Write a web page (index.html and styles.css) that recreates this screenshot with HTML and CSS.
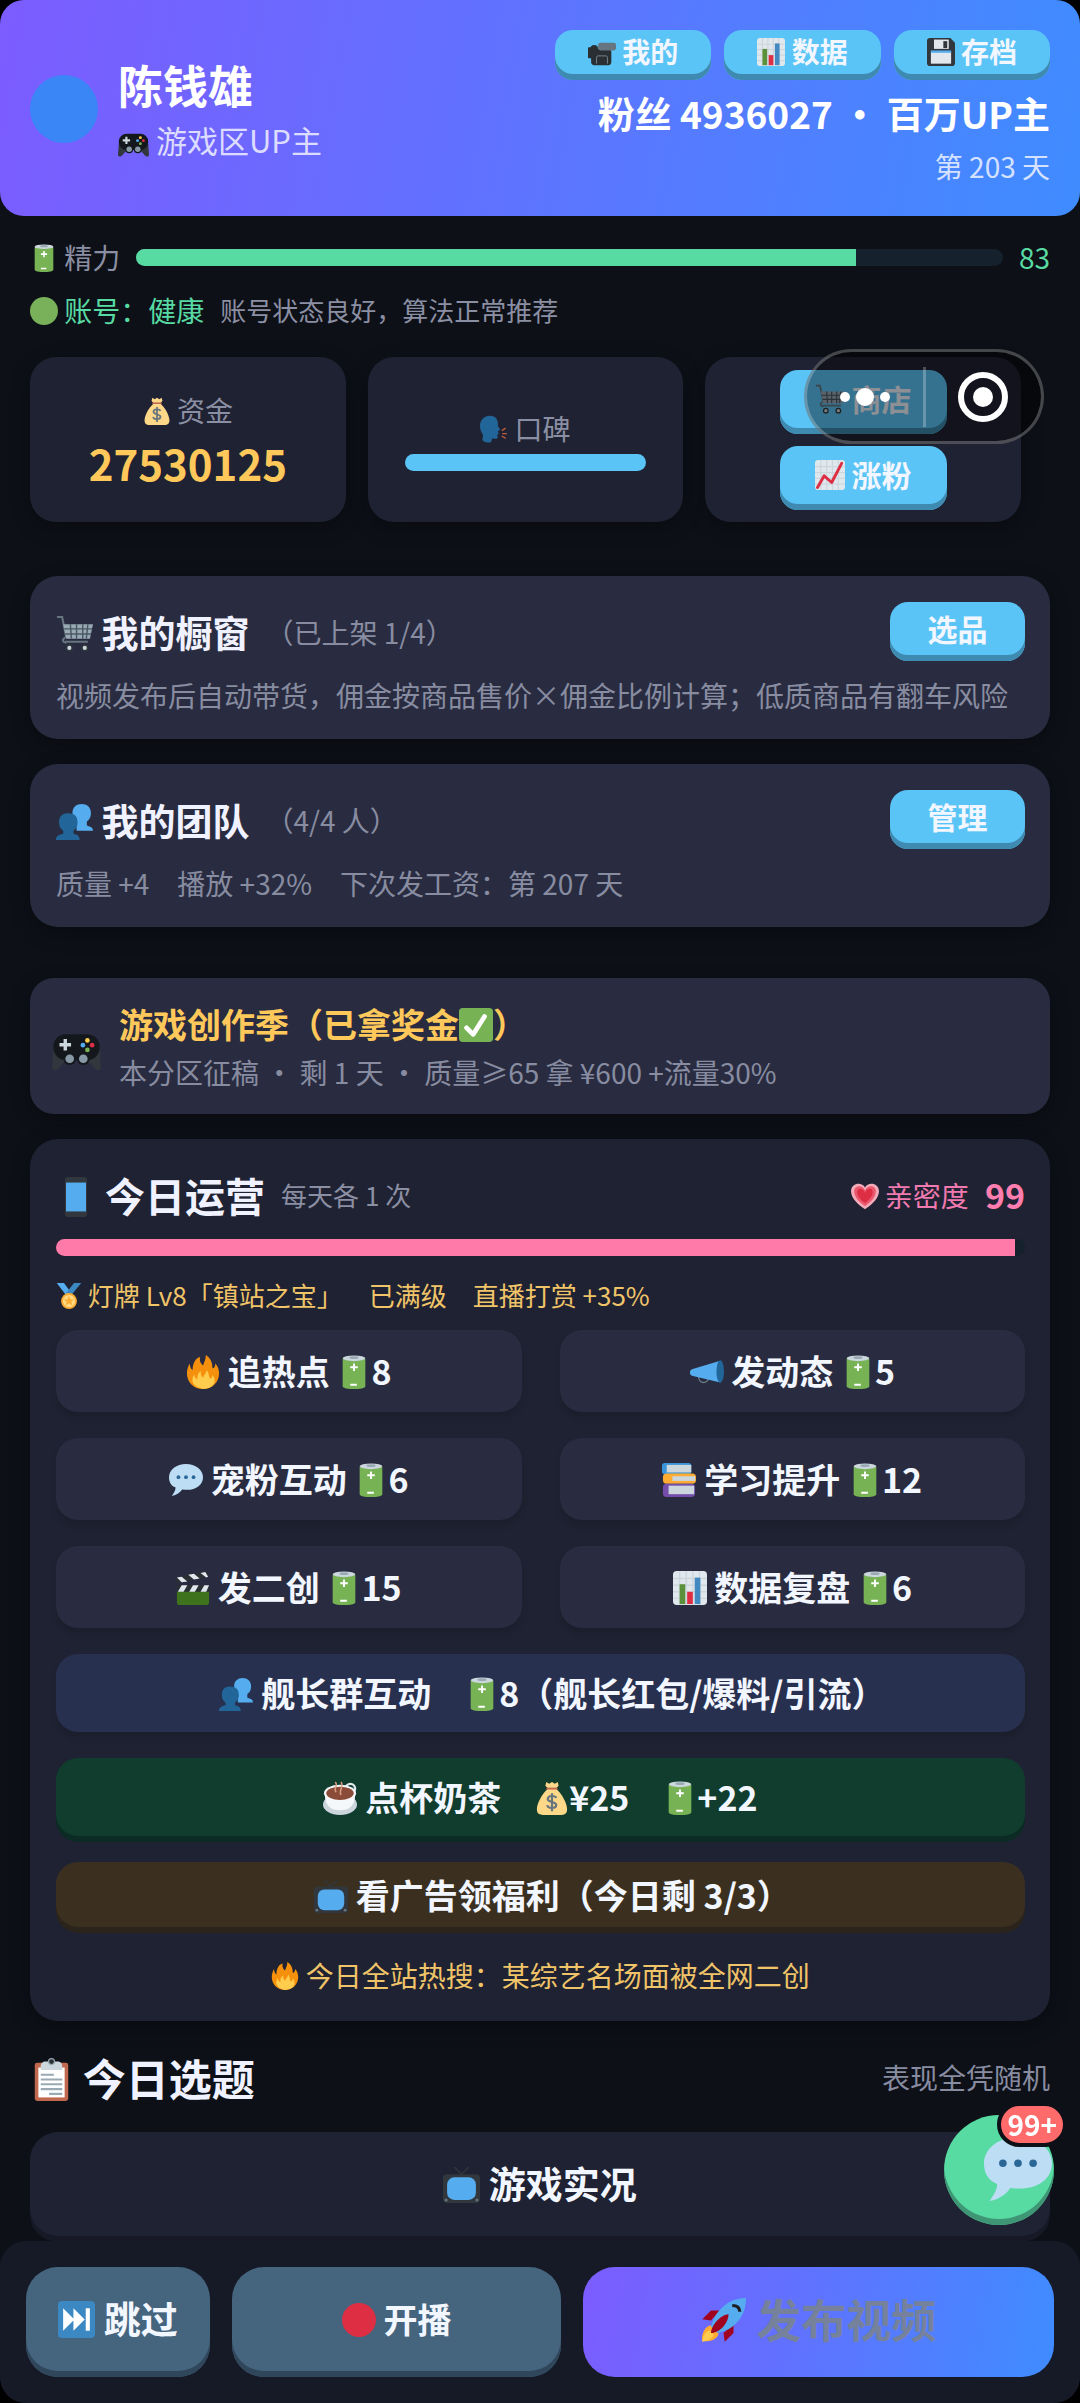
FILE: index.html
```html
<!DOCTYPE html>
<html lang="zh-CN">
<head>
    <meta charset="UTF-8">
    <meta name="viewport" content="width=device-width, initial-scale=1.0">
    <title>UP主模拟器</title>
    <link rel="stylesheet" href="styles.css">
</head>
<body>
    <!-- icon sprite -->
    <svg class="sprite" aria-hidden="true">
        <symbol id="gamepad" viewBox="0 0 36 36">
            <path fill="#31373D" d="M1 20L0 33c0 3 3 3 5 1l6-7h14l6 7c2 2 5 2 5-1l-1-13z"/>
            <rect x="1" y="9" width="34" height="19" rx="9" fill="#14181c"/>
            <circle cx="13" cy="27" r="4.6" fill="#14181c"/><circle cx="23" cy="27" r="4.6" fill="#14181c"/>
            <circle cx="13" cy="27" r="3.2" fill="#8899A6"/><circle cx="23" cy="27" r="3.2" fill="#8899A6"/>
            <path fill="#CCD6DD" d="M8.500 12.500h2.500v3h3v2.500h-3v3H8.500v-3h-3v-2.500h3z"/>
            <circle cx="26" cy="13.500" r="1.700" fill="#FFCC4D"/><circle cx="29.500" cy="17" r="1.700" fill="#DD2E44"/>
            <circle cx="22.700" cy="17" r="1.700" fill="#55ACEE"/><circle cx="26" cy="20.500" r="1.700" fill="#77B255"/>
        </symbol>
        <symbol id="movie" viewBox="0 0 36 36">
            <rect x="0" y="12" width="5" height="14" rx="1" fill="#292F33"/>
            <rect x="4" y="14" width="26" height="21" rx="4" fill="#292F33"/>
            <circle cx="8" cy="14" r="5" fill="#292F33"/>
            <rect x="13" y="6" width="23" height="10" rx="3" fill="#66757F"/>
            <path fill="none" stroke="#8899A6" d="M11 33v-8q0-2 2-2h10q2 0 2 2v8"/>
        </symbol>
        <symbol id="bars" viewBox="0 0 36 36">
            <rect width="36" height="36" rx="4" fill="#E1E8ED"/>
            <path fill="none" stroke="#CCD6DD" stroke-width="1.500" d="M0 8h36M0 15h36M0 22h36M0 29h36M7 0v36M14 0v36M21 0v36M28 0v36"/>
            <path fill="#5C913B" d="M7 14h6v21H7z"/><path fill="#DD2E44" d="M15 22h6v13h-6z"/><path fill="#4289C1" d="M23 7h6v28h-6z"/>
        </symbol>
        <symbol id="disk" viewBox="0 0 36 36">
            <path fill="#31373D" d="M4 0h26l6 6v26a4 4 0 0 1-4 4H4a4 4 0 0 1-4-4V4a4 4 0 0 1 4-4z"/>
            <path fill="#E1E8ED" d="M9 2h19v12H9z"/><path fill="#31373D" d="M21 4h5v9h-5z"/>
            <path fill="#E1E8ED" d="M5 17h26v16H5z"/><path fill="#55ACEE" d="M5 16h26v3H5z"/>
        </symbol>
        <symbol id="battery" viewBox="0 0 36 36">
            <path fill="#77B255" d="M6 4v29c0 4 24 4 24 0V4z"/>
            <ellipse cx="18" cy="3.500" rx="12" ry="3" fill="#CCD6DD"/><ellipse cx="18" cy="2.800" rx="5" ry="1.500" fill="#99AAB5"/>
            <path fill="#fff" d="M17 9h2v3h3v2h-3v3h-2v-3h-3v-2h3zM14 30.500h7v2h-7z"/>
        </symbol>
        <symbol id="green" viewBox="0 0 36 36"><circle cx="18" cy="18" r="18" fill="#78B159"/></symbol>
        <symbol id="red" viewBox="0 0 36 36"><circle cx="18" cy="18" r="18" fill="#DD2E44"/></symbol>
        <symbol id="money" viewBox="0 0 36 36">
            <path fill="#FDD888" d="M12 1l3 2 3-2 3 2 3-2 1 4-3 3c7 6 12 16 12 22 0 5-3 6-6 6H8c-3 0-6-1-6-6C2 24 7 14 14 8l-3-3z"/>
            <path fill="#BF6952" d="M12 7h12v2H12z"/>
            <path fill="none" stroke="#67757F" stroke-width="2.300" d="M22.500 18c-1-3-9-3-9 1s9 2.500 9 6.500-9 4-9.500 0M18 13v19"/>
        </symbol>
        <symbol id="speak" viewBox="0 0 36 36">
            <path fill="#269" d="M13 1C5 1 0 7 0 14c0 5 2 8 4 12l-1 6c2 3 8 4 11 3l2-5c3 1 6 1 7-1l-1-3 2-2-1-3 3-2-3-5C24 6 20 1 13 1z"/>
            <path fill="none" stroke="#BE5B3A" stroke-width="1.800" d="M28 20l5-3M28.500 24h6M28 27l5 3"/>
        </symbol>
        <symbol id="cart" viewBox="0 0 36 36">
            <path fill="none" stroke="#66757F" stroke-width="2" d="M1 2h5l4 20M9 26h22M9 22c-4 2-2 5 1 5"/>
            <path fill="#99AAB5" d="M7 9h29l-3 14H10z"/>
            <path fill="none" stroke="#4b5864" stroke-width="1.400" d="M8 13.500h27M9 18.500h25M14 9l1 14M20 9v14M26 9v14M31 9l-1.500 14"/>
            <circle cx="13" cy="32" r="3.500" fill="#31373D"/><circle cx="28" cy="32" r="3.500" fill="#31373D"/>
            <circle cx="13" cy="32" r="2" fill="#CCD6DD"/><circle cx="28" cy="32" r="2" fill="#CCD6DD"/>
        </symbol>
        <symbol id="trend" viewBox="0 0 36 36">
            <rect width="36" height="36" rx="4" fill="#E1E8ED"/>
            <path fill="none" stroke="#CCD6DD" stroke-width="1.500" d="M0 8h36M0 15h36M0 22h36M0 29h36M7 0v36M14 0v36M21 0v36M28 0v36"/>
            <path fill="none" stroke="#DD2E44" stroke-width="3.500" stroke-linecap="round" stroke-linejoin="round" d="M3 33l8-14 9 8L32 4"/>
        </symbol>
        <symbol id="people" viewBox="0 0 36 36">
            <path fill="#55ACEE" d="M36 27c0-4-4-4-6-5v-4c3-2 4-5 4-8 0-6-4-9-9-9s-9 3-9 9c0 3 1 6 4 8v9z"/>
            <path fill="#269" d="M0 36c0-4 3-5 7-6v-3c-3-2-4-5-4-8 0-6 3-9 9-9s9 3 9 9c0 3-1 6-4 8v3c4 1 6 2 6 6z"/>
        </symbol>
        <symbol id="check" viewBox="0 0 36 36">
            <rect width="36" height="36" rx="4" fill="#77B255"/>
            <path fill="none" stroke="#fff" stroke-width="5" stroke-linecap="round" stroke-linejoin="round" d="M8 21l7 7L27 9"/>
        </symbol>
        <symbol id="phone" viewBox="0 0 36 36">
            <rect x="8" y="0" width="20" height="36" rx="3" fill="#31373D"/><path fill="#55ACEE" d="M9 5h18v26H9z"/>
        </symbol>
        <symbol id="heart" viewBox="0 0 36 36">
            <path fill="#F4ABBA" d="M18 35C8 29 0 20 0 12 0 1 14-1 18 7c4-8 18-6 18 5 0 8-8 17-18 23z"/>
            <path fill="#EA596E" d="M18 31C10 26 4 19 4 12c0-8 11-9 14-1 3-8 14-7 14 1 0 7-6 14-14 19z"/>
            <path fill="#DD2E44" d="M18 27C12 23 8 18 8 13c0-6 8-6 10 1 2-7 10-7 10-1 0 5-4 10-10 14z"/>
        </symbol>
        <symbol id="medal" viewBox="0 0 36 36">
            <path fill="#55ACEE" d="M1 0h10l9 12-6 5z"/><path fill="#3B88C3" d="M25 0h10L21 17l-7-3z"/>
            <circle cx="18" cy="25" r="11" fill="#FFAC33"/><circle cx="18" cy="25" r="8.500" fill="#FFD983"/>
            <path fill="#FFAC33" d="M18 18l2 5h5l-4 3 2 5-5-3-5 3 2-5-4-3h5z"/>
        </symbol>
        <symbol id="fire" viewBox="0 0 36 36">
            <path fill="#F4900C" d="M35 19c0 10-7 17-17 17S1 29 1 19c0-3 1-7 3-10 0 3 1 6 3 7C7 9 10 3 15 2c-1 5 1 7 3 9 1-3 3-6 3-11 5 3 7 8 7 14 2 0 3-2 3-5 3 3 4 7 4 10z"/>
            <path fill="#FFCC4D" d="M28 21c0 2-1 4-2 4-2 0-1-5-4-9 0 3-3 5-4 8-2-2-3-4-2-7-4 2-4 6-4 9-2-1-3-3-3-5-3 3-5 12 9 15 14-1 14-10 10-15z"/>
        </symbol>
        <symbol id="horn" viewBox="0 0 36 36">
            <path fill="none" stroke="#66757F" stroke-width="1.500" d="M9 23c1 8 9 8 11 1"/>
            <path fill="#55ACEE" d="M32 6L2 15c-3 2-3 5 0 7l30 7z"/><ellipse cx="32" cy="17.500" rx="4" ry="12" fill="#269"/>
        </symbol>
        <symbol id="bubble" viewBox="0 0 36 36">
            <path fill="#BDDDF4" d="M18 1C8 1 0 7 0 15c0 5 2 9 7 11 0 3-2 6-4 9 5-1 9-4 11-7 13 2 22-4 22-13C36 7 28 1 18 1z"/>
            <circle cx="10" cy="15" r="2" fill="#2A6797"/><circle cx="18" cy="15" r="2" fill="#2A6797"/><circle cx="26" cy="15" r="2" fill="#2A6797"/>
        </symbol>
        <symbol id="books" viewBox="0 0 36 36">
            <rect x="0" y="0" width="31" height="12" rx="3" fill="#3B94D9"/><path fill="#CCD6DD" d="M5 2h26v8H5z"/>
            <rect x="1" y="11" width="35" height="11" rx="4" fill="#FFAC33"/><path fill="#CCD6DD" d="M11 14h24v5H11z"/>
            <rect x="1" y="22" width="34" height="14" rx="4" fill="#744EAA"/><path fill="#CCD6DD" d="M7 24h27v9H7z"/>
        </symbol>
        <symbol id="clap" viewBox="0 0 36 36">
            <path fill="#3E721D" d="M1 20h34v13a3 3 0 0 1-3 3H4a3 3 0 0 1-3-3z"/>
            <path fill="#292F33" d="M1 15h34v7H1zM0 7l33-7 1 6L1 13z"/>
            <path fill="#E1E8ED" d="M6 15h6l-4 7H2zM18 15h6l-4 7h-6zM30 15h5l-3 7h-6zM1 7l5-1 6 5-6 1zM13 4l6-1 6 5-6 1zM26 2l5-1 3 5-2 1z"/>
        </symbol>
        <symbol id="coffee" viewBox="0 0 36 36">
            <ellipse cx="18" cy="25" rx="18" ry="11" fill="#CCD6DD"/>
            <circle cx="29" cy="8" r="5" fill="none" stroke="#E1E8ED" stroke-width="2.500"/>
            <path fill="#F5F8FA" d="M2 14c0 12 6 17 16 17s16-5 16-17z"/>
            <ellipse cx="18" cy="13" rx="17" ry="9" fill="#F5F8FA"/><ellipse cx="18" cy="13" rx="14.500" ry="7" fill="#8A4B38"/>
            <path fill="none" stroke="#D99E82" stroke-width="1.500" d="M13 1c4 4-3 7 1 11M19 1c4 5-3 8 0 14"/>
        </symbol>
        <symbol id="tv" viewBox="0 0 36 36">
            <path fill="none" stroke="#31373D" stroke-width="1.500" d="M11 1l7 7 7-7"/>
            <rect x="0" y="8" width="36" height="28" rx="4" fill="#31373D"/><rect x="4" y="11" width="28" height="22" rx="7" fill="#55ACEE"/>
            <circle cx="3" cy="33" r="1.500" fill="#66757F"/><circle cx="33" cy="33" r="1.500" fill="#66757F"/>
        </symbol>
        <symbol id="clipboard" viewBox="0 0 36 36">
            <rect x="4" y="4" width="28" height="32" rx="2" fill="#C1694F"/><path fill="#fff" d="M7 8h22v25H7z"/>
            <path fill="#CCD6DD" d="M13 3h3a2 2 0 0 1 4 0h3c3 0 4 2 4 4v3H9V7c0-2 1-4 4-4z"/><circle cx="18" cy="3" r="2.500" fill="#292F33" stroke="#99AAB5"/>
            <path fill="none" stroke="#99AAB5" stroke-width="1.800" d="M9 14h11M9 18h18M9 22h18M9 26h18M16 30h11"/>
        </symbol>
        <symbol id="next" viewBox="0 0 36 36">
            <rect width="36" height="36" rx="4" fill="#3B88C3"/>
            <path fill="#fff" d="M5 7l11 11L5 29zM15 7l11 11-11 11zM27 7h4v22h-4z"/>
        </symbol>
        <symbol id="rocket" viewBox="0 0 36 36">
            <path fill="#A0041E" d="M1 17l7-7h7l-7 8zM19 35l7-7v-7l-8 7z"/>
            <path fill="#FFAC33" d="M1 34c-1-6 3-12 7-12l6 6c0 4-6 8-13 6z"/><path fill="#FFCC4D" d="M1 35c0-4 3-9 6-9l3 3c0 3-5 6-9 6z"/>
            <path fill="#55ACEE" d="M36 0c-9 0-17 4-23 12-3 4-4 8-5 11l5 5c4-1 8-2 12-5C33 17 36 9 36 0z"/>
            <path fill="#A0041E" d="M8 28c0-6 8-15 14-15 0 7-7 15-14 15z"/><path fill="none" stroke="#1b1f23" stroke-width="2.500" d="M25 6c4 0 6 2 6 5"/>
        </symbol>
    </svg>

    <div class="app">
        <header class="header">
            <div class="profile">
                <div class="avatar"></div>
                <div>
                    <h1 class="name">陈钱雄</h1>
                    <div class="role"><svg class="emoji"><use href="#gamepad"/></svg> 游戏区UP主</div>
                </div>
            </div>
            <div class="header-right">
                <div class="header-btns">
                    <button class="btn btn-small"><svg class="emoji"><use href="#movie"/></svg> 我的</button>
                    <button class="btn btn-small"><svg class="emoji"><use href="#bars"/></svg> 数据</button>
                    <button class="btn btn-small"><svg class="emoji"><use href="#disk"/></svg> 存档</button>
                </div>
                <div class="fans">粉丝 4936027 · 百万UP主</div>
                <div class="day">第 203 天</div>
            </div>
        </header>

        <main class="main">
            <div class="energy">
                <span><svg class="emoji"><use href="#battery"/></svg> 精力</span>
                <div class="track"><div class="fill fill-green" style="width: 83%"></div></div>
                <span class="green">83</span>
            </div>
            <div class="account">
                <span class="green"><svg class="emoji"><use href="#green"/></svg> 账号：健康</span>
                <span class="tip">账号状态良好，算法正常推荐</span>
            </div>

            <section class="stats">
                <div class="stat">
                    <div class="stat-label"><svg class="emoji"><use href="#money"/></svg> 资金</div>
                    <div class="stat-value">27530125</div>
                </div>
                <div class="stat">
                    <div class="stat-label"><svg class="emoji"><use href="#speak"/></svg> 口碑</div>
                    <div class="track track-rep"><div class="fill fill-blue" style="width: 100%"></div></div>
                </div>
                <div class="stat stat-btns">
                    <button class="btn"><svg class="emoji"><use href="#cart"/></svg> 商店</button>
                    <button class="btn"><svg class="emoji"><use href="#trend"/></svg> 涨粉</button>
                </div>
            </section>

            <section class="panel">
                <div class="panel-head">
                    <h2><svg class="emoji"><use href="#cart"/></svg> 我的橱窗</h2>
                    <span class="note">（已上架 1/4）</span>
                    <button class="btn btn-wide">选品</button>
                </div>
                <p class="note">视频发布后自动带货，佣金按商品售价×佣金比例计算；低质商品有翻车风险</p>
            </section>

            <section class="panel">
                <div class="panel-head">
                    <h2><svg class="emoji"><use href="#people"/></svg> 我的团队</h2>
                    <span class="note">（4/4 人）</span>
                    <button class="btn btn-wide">管理</button>
                </div>
                <p class="note">质量 +4　播放 +32%　下次发工资：第 207 天</p>
            </section>

            <section class="event">
                <svg class="emoji event-icon"><use href="#gamepad"/></svg>
                <div>
                    <h3>游戏创作季（已拿奖金<svg class="emoji"><use href="#check"/></svg>）</h3>
                    <p class="note">本分区征稿 · 剩 1 天 · 质量≥65 拿 ¥600 +流量30%</p>
                </div>
            </section>

            <section class="ops">
                <div class="ops-head">
                    <h2><svg class="emoji"><use href="#phone"/></svg> 今日运营</h2>
                    <span class="tip">每天各 1 次</span>
                    <span class="love"><svg class="emoji"><use href="#heart"/></svg> 亲密度</span>
                    <strong class="love-value">99</strong>
                </div>
                <div class="track"><div class="fill fill-pink" style="width: 99%"></div></div>
                <p class="badge-line"><svg class="emoji"><use href="#medal"/></svg> 灯牌 Lv8「镇站之宝」　已满级　直播打赏 +35%</p>
                <div class="actions">
                    <button class="action"><svg class="emoji"><use href="#fire"/></svg> 追热点 <svg class="emoji"><use href="#battery"/></svg>8</button>
                    <button class="action"><svg class="emoji"><use href="#horn"/></svg> 发动态 <svg class="emoji"><use href="#battery"/></svg>5</button>
                    <button class="action"><svg class="emoji"><use href="#bubble"/></svg> 宠粉互动 <svg class="emoji"><use href="#battery"/></svg>6</button>
                    <button class="action"><svg class="emoji"><use href="#books"/></svg> 学习提升 <svg class="emoji"><use href="#battery"/></svg>12</button>
                    <button class="action"><svg class="emoji"><use href="#clap"/></svg> 发二创 <svg class="emoji"><use href="#battery"/></svg>15</button>
                    <button class="action"><svg class="emoji"><use href="#bars"/></svg> 数据复盘 <svg class="emoji"><use href="#battery"/></svg>6</button>
                    <button class="action action-full action-hang action-blue"><svg class="emoji"><use href="#people"/></svg> 舰长群互动　<svg class="emoji"><use href="#battery"/></svg>8（舰长红包/爆料/引流）</button>
                    <button class="action action-full action-green"><svg class="emoji"><use href="#coffee"/></svg> 点杯奶茶　<svg class="emoji"><use href="#money"/></svg>¥25　<svg class="emoji"><use href="#battery"/></svg>+22</button>
                    <button class="action action-full action-hang action-brown"><svg class="emoji"><use href="#tv"/></svg> 看广告领福利（今日剩 3/3）</button>
                </div>
                <p class="hot"><svg class="emoji"><use href="#fire"/></svg> 今日全站热搜：某综艺名场面被全网二创</p>
            </section>

            <div class="topic-head">
                <h2><svg class="emoji"><use href="#clipboard"/></svg> 今日选题</h2>
                <span class="note">表现全凭随机</span>
            </div>
            <button class="topic"><svg class="emoji"><use href="#tv"/></svg> 游戏实况</button>
        </main>

        <nav class="bottom-bar">
            <button class="bar-btn bar-skip"><svg class="emoji"><use href="#next"/></svg> 跳过</button>
            <button class="bar-btn"><svg class="emoji"><use href="#red"/></svg> 开播</button>
            <button class="bar-btn bar-publish"><svg class="emoji"><use href="#rocket"/></svg> 发布视频</button>
        </nav>

        <button class="fab" aria-label="私信">
            <svg class="fab-icon"><use href="#bubble"/></svg>
            <span class="fab-badge">99+</span>
        </button>

        <!-- mini program capsule -->
        <div class="capsule">
            <button class="capsule-btn capsule-more" aria-label="更多">
                <svg width="52" height="20" viewBox="0 0 52 20"><circle cx="6" cy="10" r="5"/><circle cx="26" cy="10" r="9"/><circle cx="46" cy="10" r="5"/></svg>
            </button>
            <button class="capsule-btn" aria-label="关闭">
                <svg width="50" height="50" viewBox="0 0 50 50"><circle cx="25" cy="25" r="22" fill="none" stroke="#fff" stroke-width="6"/><circle cx="25" cy="25" r="10"/></svg>
            </button>
        </div>
    </div>
</body>
</html>
```
FILE: styles.css
```css
* {
    box-sizing: border-box;
}

html {
    background: #000;
}

body {
    margin: 0;
    font-family: 'Noto Sans CJK SC', sans-serif;
    font-size: 28px;
    line-height: 40px;
    text-spacing-trim: space-all;
    color: #f0f2ff;
}

h1, h2, h3, p {
    margin: 0;
}

button {
    font-family: inherit;
    font-weight: 700;
    color: #f2f6ff;
    border: none;
    padding: 0;
    white-space: nowrap;
    cursor: pointer;
}

.sprite {
    position: absolute;
    width: 0;
    height: 0;
}

.emoji {
    width: 1em;
    height: 1em;
    vertical-align: -0.12em;
}

.app {
    min-height: 100vh;
    padding-bottom: 162px;
    background: #0d1017;
    border-radius: 26px;
}

/* header */
.header {
    display: flex;
    justify-content: space-between;
    align-items: center;
    padding: 30px 30px 28px;
    border-radius: 24px;
    background: linear-gradient(100deg, #7c5cff, #3f8cff);
}

.profile {
    display: flex;
    align-items: center;
    gap: 20px;
}

.avatar {
    width: 68px;
    height: 68px;
    border-radius: 50%;
    background: #3a86f7;
}

.name {
    font-size: 45px;
    line-height: 66px;
    color: #fff;
}

.role {
    margin-bottom: 4px;
    font-size: 31px;
    line-height: 44px;
    color: #dcdcff;
}

.header-right {
    text-align: right;
}

.header-btns {
    display: flex;
    justify-content: flex-end;
    gap: 13px;
}

.fans {
    margin-top: 6px;
    font-size: 37px;
    font-weight: 700;
    line-height: 54px;
    color: #fff;
}

.day {
    margin: 6px 0 2px;
    color: #d5e2ff;
}

.btn {
    height: 64px;
    padding: 0 35px 8px;
    border-radius: 18px;
    font-size: 30px;
    line-height: 40px;
    background: #5ac4f6;
    box-shadow: inset 0 -6px 0 #3f8ab0;
}

.btn-small {
    height: 50px;
    padding: 0 33px 8px;
    font-size: 28px;
}

.btn-wide {
    width: 135px;
    height: 59px;
    padding: 0 0 8px;
    margin-left: auto;
}

/* status rows */
.main {
    padding: 21px 30px 0;
}

.energy {
    display: flex;
    align-items: center;
    gap: 16px;
    color: #8b8fa3;
}

.track {
    flex: 1;
    height: 17px;
    border-radius: 9px;
    background: #15212c;
    overflow: hidden;
}

.fill {
    height: 100%;
}

.fill-green {
    background: #58daa3;
}

.fill-blue {
    background: #5ac4f6;
}

.fill-pink {
    background: #ff7aa8;
}

.green {
    color: #58daa3;
}

.account {
    display: flex;
    align-items: center;
    gap: 16px;
    margin-top: 13px;
}

.tip {
    font-size: 26px;
    color: #8b8fa3;
}

.stats {
    display: grid;
    grid-template-columns: repeat(3, 1fr);
    gap: 22px;
    margin: 27px 29px 54px 0;
}

.stat {
    display: flex;
    flex-direction: column;
    align-items: center;
    justify-content: center;
    gap: 6px;
    height: 165px;
    border-radius: 26px;
    background: #1f2232;
    box-shadow: 0 6px 20px rgba(0, 0, 0, 0.3);
}

.stat-label {
    color: #8b8fa3;
}

.stat-value {
    font-size: 42px;
    font-weight: 700;
    line-height: 54px;
    color: #ffc85a;
}

.track-rep {
    flex: none;
    width: 241px;
}

.stat-btns {
    gap: 12px;
}

/* panels */
.panel {
    margin-bottom: 25px;
    padding: 26px 25px 24px 26px;
    border-radius: 28px;
    background: #292c40;
    box-shadow: 0 6px 20px rgba(0, 0, 0, 0.3);
}

.panel-head {
    display: flex;
    align-items: center;
    gap: 16px;
    margin-bottom: 14px;
}

.panel h2 {
    font-size: 37px;
    line-height: 56px;
}

.note {
    color: #888ca1;
}

.event {
    display: flex;
    align-items: center;
    gap: 18px;
    margin: 51px 0 25px;
    padding: 22px;
    border-radius: 24px;
    background: #292c40;
    box-shadow: 0 6px 20px rgba(0, 0, 0, 0.3);
}

.event-icon {
    font-size: 49px;
}

.event h3 {
    margin-bottom: 4px;
    font-size: 34px;
    line-height: 48px;
    color: #ffc85a;
}

.ops {
    padding: 26px 25px 26px 26px;
    border-radius: 28px;
    background: #1f2232;
    box-shadow: 0 6px 20px rgba(0, 0, 0, 0.3);
}

.ops-head {
    display: flex;
    align-items: center;
    gap: 16px;
    margin-bottom: 14px;
}

.ops h2 {
    font-size: 40px;
    line-height: 60px;
}

.love {
    margin-left: auto;
    color: #f07ab0;
}

.love-value {
    font-size: 34px;
    color: #ff7eb0;
}

.badge-line {
    margin: 19px 0 15px;
    font-size: 26px;
    color: #f0c468;
}

.actions {
    display: grid;
    grid-template-columns: 1fr 1fr;
    gap: 26px 38px;
}

.action {
    height: 82px;
    border-radius: 22px;
    font-size: 34px;
    line-height: 48px;
    background: #292c40;
    box-shadow: 0 6px 6px rgba(0, 0, 0, 0.12);
}

.action-full {
    grid-column: 1 / -1;
    height: 78px;
}

/* balances the blank half of the closing bracket */
.action-hang {
    padding-left: 24px;
}

.action-blue {
    background: #28304f;
}

.action-green {
    background: #103d2e;
    box-shadow: 0 6px 0 #0c2b24;
}

.action-brown {
    height: 65px;
    background: #3b3020;
    box-shadow: 0 6px 0 #2a241d;
}

.hot {
    margin-top: 28px;
    text-align: center;
    color: #f0c468;
}

/* topics */
.topic-head {
    display: flex;
    justify-content: space-between;
    align-items: center;
    padding: 25px 0 24px;
}

.topic-head h2 {
    font-size: 43px;
    line-height: 62px;
}

.topic {
    width: 100%;
    height: 104px;
    padding-bottom: 2px;
    border-radius: 28px;
    font-size: 37px;
    background: #1f2232;
    box-shadow: 0 6px 0 #171a26;
}

.bottom-bar {
    position: fixed;
    left: 0;
    right: 0;
    bottom: 0;
    display: grid;
    grid-template-columns: 184px 7fr 10fr;
    gap: 22px;
    padding: 26px;
    border-radius: 26px;
    background: #161a26;
}

.bar-btn {
    height: 110px;
    padding-bottom: 8px;
    border-radius: 32px;
    font-size: 34px;
    background: #45657f;
    box-shadow: inset 0 -6px 0 #30475b;
}

.bar-skip {
    font-size: 37px;
}

.bar-publish {
    font-size: 45px;
    color: #76829c;
    background: linear-gradient(100deg, #7c5cff, #3f8cff);
    box-shadow: none;
}

/* floating controls */
.fab {
    position: fixed;
    right: 26px;
    bottom: 178px;
    width: 110px;
    height: 110px;
    border-radius: 50%;
    background: #58daa3;
    box-shadow: inset 0 -6px 0 #3f9675;
}

.fab-icon {
    position: absolute;
    top: 20px;
    right: 2px;
    width: 68px;
    height: 68px;
}

.fab-badge {
    position: absolute;
    top: -13px;
    right: -13px;
    padding: 0 6px;
    border: 4px solid #0d1017;
    border-radius: 24px;
    font-size: 28px;
    line-height: 37px;
    color: #fff;
    background: #ff6b6b;
}

.capsule {
    position: fixed;
    top: 349px;
    right: 36px;
    display: flex;
    align-items: center;
    width: 240px;
    height: 95px;
    border: 3px solid rgba(255, 255, 255, 0.25);
    border-radius: 48px;
    background: rgba(0, 0, 0, 0.42);
}

.capsule-btn {
    flex: 1;
    display: flex;
    align-items: center;
    justify-content: center;
    height: 60px;
    background: none;
    fill: #fff;
}

.capsule-more {
    border-right: 3px solid rgba(255, 255, 255, 0.25);
}
```
